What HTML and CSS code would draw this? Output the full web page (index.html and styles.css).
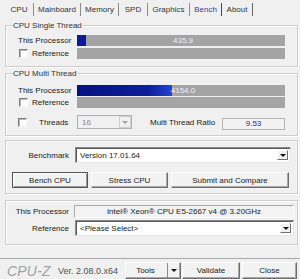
FILE: index.html
```html
<!DOCTYPE html>
<html>
<head>
<meta charset="utf-8">
<link rel="stylesheet" href="styles.css">
</head>
<body>
<div class="tabs">
  <div class="tab t-cpu">CPU</div>
  <div class="tab t-mb">Mainboard</div>
  <div class="tab t-mem">Memory</div>
  <div class="tab t-spd">SPD</div>
  <div class="tab t-gfx">Graphics</div>
  <div class="tab t-bench active">Bench</div>
  <div class="tab t-about">About</div>
</div>
<div class="panel">
  <div class="group g1">
    <span class="legend">CPU Single Thread</span>
    <div class="row">
      <span class="lbl">This Processor</span>
      <div class="bar"><div class="fill single" style="width:9px"></div><span class="val">435.9</span></div>
    </div>
    <div class="row">
      <span class="lbl chkl"><span class="cb"></span>Reference</span>
      <div class="bar"></div>
    </div>
  </div>
  <div class="group g2">
    <span class="legend">CPU Multi Thread</span>
    <div class="row">
      <span class="lbl">This Processor</span>
      <div class="bar"><div class="fill multi" style="width:95px"></div><span class="val">4154.0</span></div>
    </div>
    <div class="row">
      <span class="lbl chkl"><span class="cb"></span>Reference</span>
      <div class="bar"></div>
    </div>
    <div class="row threads">
      <span class="cb"></span>
      <span class="thl">Threads</span>
      <div class="combo disabled"><span class="ctext">16</span><span class="arrow"><i class="tri"></i></span></div>
      <span class="mtr">Multi Thread Ratio</span>
      <div class="ratio">9.53</div>
    </div>
  </div>
  <div class="group g3">
    <div class="frow">
      <span class="flbl b">Benchmark</span>
      <div class="combo wide"><span class="ctext">Version 17.01.64</span><span class="arrow"><i class="tri"></i></span></div>
    </div>
    <div class="btnrow">
      <div class="btn def w-bench">Bench CPU</div>
      <div class="btn w-stress">Stress CPU</div>
      <div class="btn w-submit">Submit and Compare</div>
    </div>
  </div>
  <div class="group g4">
    <div class="frow">
      <span class="flbl">This Processor</span>
      <div class="field">Intel® Xeon® CPU E5-2667 v4 @ 3.20GHz</div>
    </div>
    <div class="frow r2">
      <span class="flbl">Reference</span>
      <div class="combo wide2"><span class="ctext">&lt;Please Select&gt;</span><span class="arrow"><i class="tri"></i></span></div>
    </div>
  </div>
</div>
<div class="footer">
  <span class="logo">CPU-Z</span>
  <span class="ver">Ver. 2.08.0.x64</span>
  <div class="btn tools"><span class="tl">Tools</span><span class="tarr"><i class="tri"></i></span></div>
  <div class="btn validate">Validate</div>
  <div class="btn close">Close</div>
</div>
</body>
</html>
```
FILE: styles.css
```css
* { box-sizing: border-box; }
html, body { margin: 0; padding: 0; }
body {
  width: 300px;
  height: 279px;
  overflow: hidden;
  background: #f0f0f0;
  font-family: "Liberation Sans", Arial, sans-serif;
  font-size: 8px;
  color: #222;
}

/* tabs */
.tabs { display: flex; height: 17px; padding-left: 5px; }
.tab {
  margin-top: 3px;
  height: 13px;
  display: flex;
  align-items: center;
  justify-content: center;
  border-right: 1px solid #8c8c8c;
  color: #333;
}
.tab.active { color: #3a3aa0; }
.t-about { border-right: 1px solid #6a6a6a; }
.t-bench { border-right: 1px solid #4a4a4a; }
.t-cpu { width: 29px; }
.t-mb { width: 47px; }
.t-mem { width: 38px; }
.t-spd { width: 29px; }
.t-gfx { width: 42px; }
.t-bench { width: 32px; }
.t-about { width: 31px; }

/* panel */
.panel {
  height: 242px;
  padding: 8px 2px 0 5px;
  border-bottom: 1px solid #a8a8a8;
  display: flex;
  flex-direction: column;
}
.group {
  position: relative;
  border: 1px solid #cdcdcd;
  box-shadow: inset 1px 1px 0 #fff, 1px 1px 0 #fff;
  flex: none;
}
.legend {
  position: absolute;
  top: -6px;
  left: 6px;
  padding: 0 1px;
  line-height: 11px;
  background: #f0f0f0;
  color: #333;
}
.g1 { height: 42px; padding: 9px 11px 0 12px; display: flex; flex-direction: column; gap: 2px; }
.g2 { margin-top: 6px; height: 63px; padding: 11px 11px 0 12px; display: flex; flex-direction: column; gap: 1px; }
.g3 { margin-top: 4px; height: 54px; padding: 6px 7px 0 6px; }
.g4 { margin-top: 6px; height: 45px; padding: 4px 8px 0 6px; }

.row { display: flex; align-items: center; height: 11px; }
.lbl { width: 59px; flex: none; display: flex; align-items: center; color: #1a1a1a; }
.chkl { padding-left: 1px; }
.cb {
  width: 9px; height: 9px; flex: none;
  background: #fff;
  border: 1px solid;
  border-color: #7c7c7c #f4f4f4 #f4f4f4 #7c7c7c;
  box-shadow: inset 1px 1px 0 #b8b8b8;
  margin-right: 4px;
}
.bar {
  width: 208px; height: 11px; flex: none;
  background: #a4a4a4;
  display: grid;
}
.fill, .val { grid-area: 1 / 1; }
.fill { justify-self: start; height: 11px; }
.fill.single { background: #0f1b92; }
.fill.multi { background: linear-gradient(to right, #05127e, #0c1e9a 75%, #2444d4); }
.val { justify-self: center; align-self: center; color: #eeeef4; line-height: 11px; padding-left: 4px; }

.threads { height: 14px; margin-top: 6px; }
.threads .cb { margin-left: 0; margin-right: 12px; }
.thl { width: 38px; flex: none; }
.combo {
  display: flex; align-items: center;
  background: #fff;
  border: 1px solid;
  border-color: #8a8a8a #e6e6e6 #e6e6e6 #8a8a8a;
  box-shadow: inset 1px 1px 0 #5a5a5a;
  flex: none;
}
.combo.disabled { width: 55px; height: 14px; background: #f0f0f0; box-shadow: none; border-color: #b0b0b0; color: #8a8a8a; }
.ctext { flex: 1; padding-left: 4px; white-space: nowrap; }
.arrow {
  width: 11px; height: 10px; margin-right: 2px; flex: none;
  display: flex; align-items: center; justify-content: center;
  background: #f0f0f0;
  border: 1px solid; border-color: #fff #707070 #707070 #fff;
}
.combo.disabled .arrow { border-color: #d0d0d0; background: #f0f0f0; height: 12px; width: 12px; margin-right: 0; }
.tri { display: block; width: 0; height: 0; border-left: 3px solid transparent; border-right: 3px solid transparent; border-top: 3px solid #111; }
.combo.disabled .tri { border-top-color: #a0a0a0; }
.mtr { margin-left: 18px; width: 72px; flex: none; color: #1a1a1a; }
.ratio {
  width: 63px; height: 12px; flex: none;
  border: 1px solid #b4b4b4;
  background: #f2f2f2;
  display: flex; align-items: center; justify-content: center;
  color: #2a2a7a;
  margin-top: 3px;
}

.frow { display: flex; align-items: center; }
.flbl { width: 57px; flex: none; text-align: right; padding-right: 0; color: #1a1a1a; }
.flbl.b { width: 57px; }
.combo.wide { margin-left: 6px; width: 216px; height: 16px; }
.combo.wide2 { margin-left: 6px; width: 219px; height: 16px; }
.field {
  margin-left: 5px;
  width: 220px; height: 13px; flex: none;
  border: 1px solid; border-color: #a8a8a8 #fff #fff #a8a8a8;
  background: #f3f3f3;
  display: flex; align-items: center; justify-content: center;
  color: #1a1a1a;
}
.r2 { margin-top: 2px; }

.btnrow { display: flex; margin-top: 9px; gap: 3px; }
.btn {
  height: 16px;
  display: flex; align-items: center; justify-content: center;
  background: #f2f2f2;
  border: 1px solid;
  border-color: #fff #6e6e6e #6e6e6e #fff;
  box-shadow: inset -1px -1px 0 #a8a8a8;
  color: #222;
  flex: none;
}
.btn.def { border-color: #555; box-shadow: inset 1px 1px 0 #fff, inset -1px -1px 0 #999; }
.w-bench { width: 76px; }
.w-stress { width: 77px; }
.w-submit { width: 118px; }

/* footer */
.footer { display: flex; align-items: center; height: 20px; padding: 3px 3px 0 7px; }
.logo { font-size: 14px; font-style: italic; color: #a2a2a2; letter-spacing: 0.2px; width: 51px; flex: none; }
.ver { font-size: 9px; color: #505050; }
.tools { margin-left: auto; width: 56px; height: 17px; padding: 0; justify-content: flex-start; }
.tl { flex: 1; text-align: center; padding-right: 2px; }
.tarr { width: 13px; height: 100%; border-left: 1px solid #8a8a8a; display: flex; align-items: center; justify-content: center; }
.validate { width: 58px; height: 17px; margin-left: 1px; }
.close { width: 55px; height: 17px; margin-left: 2px; }
```
